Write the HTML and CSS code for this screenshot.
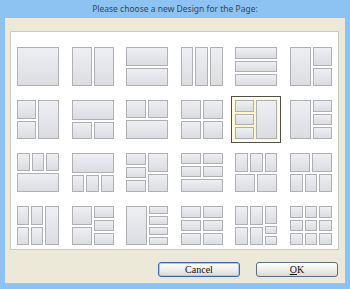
FILE: index.html
```html
<!DOCTYPE html>
<html lang="en">
<head>
	<meta charset="UTF-8">
	<title>Page design</title>
	<link rel="stylesheet" href="styles.css">
</head>
<body>
	<section class="window">
		<div class="title">Please choose a new Design for the Page:</div>
		<div class="client">
			<div class="panel">
				<!-- row 1 -->
				<div class="cell"><div class="tile"><i></i></div></div>
				<div class="cell"><div class="tile h"><i></i><i></i></div></div>
				<div class="cell"><div class="tile"><i></i><i></i></div></div>
				<div class="cell"><div class="tile h"><i></i><i></i><i></i></div></div>
				<div class="cell"><div class="tile"><i></i><i></i><i></i></div></div>
				<div class="cell"><div class="tile h"><i></i><div class="v"><i></i><i></i></div></div></div>
				<!-- row 2 -->
				<div class="cell"><div class="tile h"><div class="v"><i></i><i></i></div><i></i></div></div>
				<div class="cell"><div class="tile"><i></i><div class="h"><i></i><i></i></div></div></div>
				<div class="cell"><div class="tile"><div class="h"><i></i><i></i></div><i></i></div></div>
				<div class="cell"><div class="tile"><div class="h"><i></i><i></i></div><div class="h"><i></i><i></i></div></div></div>
				<div class="cell on"><div class="tile h"><div class="v"><i></i><i></i><i></i></div><i></i></div></div>
				<div class="cell"><div class="tile h"><i></i><div class="v"><i></i><i></i><i></i></div></div></div>
				<!-- row 3 -->
				<div class="cell"><div class="tile"><div class="h"><i></i><i></i><i></i></div><i></i></div></div>
				<div class="cell"><div class="tile"><i></i><div class="h"><i></i><i></i><i></i></div></div></div>
				<div class="cell"><div class="tile h"><div class="v"><i></i><i></i><i></i></div><div class="v"><i></i><i></i></div></div></div>
				<div class="cell"><div class="tile"><div class="h"><i></i><i></i></div><div class="h"><i></i><i></i></div><i></i></div></div>
				<div class="cell"><div class="tile"><div class="h"><i></i><i></i><i></i></div><div class="h"><i></i><i></i></div></div></div>
				<div class="cell"><div class="tile"><div class="h"><i></i><i></i></div><div class="h"><i></i><i></i><i></i></div></div></div>
				<!-- row 4 -->
				<div class="cell"><div class="tile h"><div class="v"><i></i><i></i></div><div class="v"><i></i><i></i></div><i></i></div></div>
				<div class="cell"><div class="tile h"><div class="v"><i></i><i></i></div><div class="v"><i></i><i></i><i></i></div></div></div>
				<div class="cell"><div class="tile h"><i></i><div class="v"><i></i><i></i><i></i><i></i></div></div></div>
				<div class="cell"><div class="tile h"><div class="v"><i></i><i></i><i></i></div><div class="v"><i></i><i></i><i></i></div></div></div>
				<div class="cell"><div class="tile h"><div class="v"><i></i><i></i></div><div class="v"><i></i><i></i></div><div class="v"><i class="big"></i><i></i><i></i></div></div></div>
				<div class="cell"><div class="tile h"><div class="v"><i></i><i></i><i></i></div><div class="v"><i></i><i></i><i></i></div><div class="v"><i></i><i></i><i></i></div></div></div>
			</div>
			<div class="buttons">
				<button class="btn cancel">Cancel</button>
				<button class="btn ok"><u>O</u>K</button>
			</div>
		</div>
	</section>
</body>
</html>
```

FILE: styles.css
```css
*{margin:0; padding:0; box-sizing:border-box;}
body{
	background-color:#8cc3f2;
	font-family:"Noto Sans", "Liberation Sans", sans-serif;
}
.window{
	width:350px;
	height:289px;
	display:flex;
	flex-direction:column;
}
.title{
	height:18px;
	line-height:17px;
	text-align:center;
	font-size:8.5px;
	color:#3a4654;
}
.client{
	margin:0 5px;
	height:265px;
	background-color:#ece9d8;
	padding:13px 0 0 5px;
}
.panel{
	width:329px;
	height:219px;
	background-color:#fff;
	border:1px solid #cdcac0;
	padding:11px 0 0 2px;
	display:grid;
	grid-template-columns:repeat(6, 50px);
	grid-auto-rows:47px;
	column-gap:4.6px;
	row-gap:6px;
}
.cell{
	padding:4px;
	border:1px solid transparent;
}
.cell.on{
	border-color:#505050;
	background-color:#fcf9c6;
	box-shadow:inset 0 0 0 2px #fffde3;
}
.tile{
	width:42px;
	height:39px;
	margin:-1px 0 0 -1px;
	display:flex;
	flex-direction:column;
	gap:2px;
}
.tile .h, .tile .v{
	flex:1;
	display:flex;
	gap:2px;
	min-width:0;
	min-height:0;
}
.tile.h, .tile .h{flex-direction:row;}
.tile .v{flex-direction:column;}
.tile i{
	display:block;
	flex:1;
	min-width:0;
	min-height:0;
	border:1px solid #b0b0b4;
	background:linear-gradient(#eeeff3, #dcdde2);
}
.tile i.big{flex:2.3;}
.buttons{
	display:flex;
	justify-content:flex-end;
	gap:16px;
	padding:12px 7px 0 0;
}
.btn{
	width:82px;
	height:15px;
	border:1px solid #5a6e88;
	border-radius:3px;
	background:linear-gradient(#ffffff, #ecebe6 60%, #dcdad2);
	font-family:"Liberation Serif", serif;
	font-size:10px;
	line-height:12px;
	color:#111;
}
.btn.cancel{
	border-color:#3a66b8;
	box-shadow:inset 0 0 0 1px #a9c8f0;
}
.btn u{text-decoration:underline;}
```
